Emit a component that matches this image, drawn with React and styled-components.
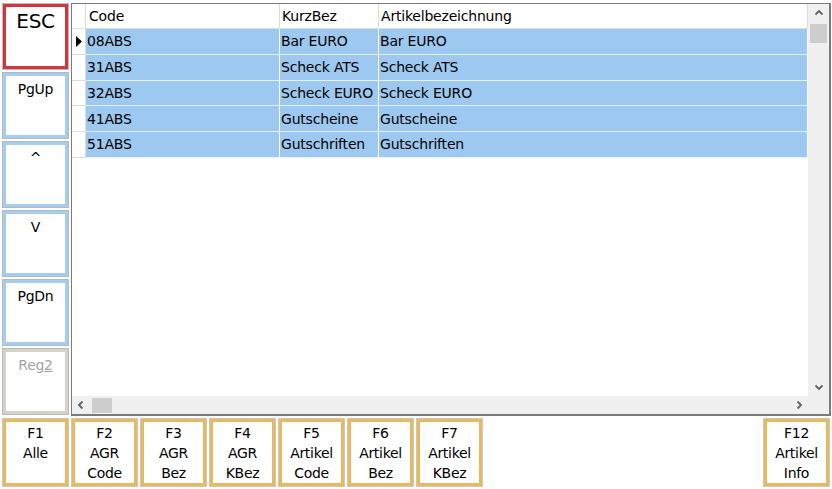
import React from "react";
import styled, { createGlobalStyle } from "styled-components";

const Global = createGlobalStyle`
  html, body { margin: 0; padding: 0; background: #ffffff; }
  body { font-family: "DejaVu Sans", "Liberation Sans", sans-serif; }
  * { box-sizing: border-box; }
`;

const Page = styled.div`
  width: 832px;
  height: 489px;
  display: flex;
  flex-direction: column;
  background: #ffffff;
  overflow: hidden;
`;

const Top = styled.div`
  display: flex;
  height: 416px;
  padding-top: 3px;
  gap: 1px;
`;

const SideCol = styled.div`
  width: 70px;
  padding-left: 2px;
  display: flex;
  flex-direction: column;
  gap: 2px;
`;

const KeyButton = styled.div`
  width: 67px;
  height: 67px;
  border: 1px solid #b9b9b9;
  background: #ffffff;
  display: flex;
  flex-direction: column;
  align-items: center;
  box-shadow: inset 0 0 0 3px ${(p) => p.$color};
  padding-top: ${(p) => p.$pad || 6}px;
  font-size: ${(p) => p.$size || 14}px;
  line-height: 20px;
  color: ${(p) => (p.$disabled ? "#a3a3a3" : "#000000")};
  font-family: "DejaVu Sans", "Liberation Sans", sans-serif;
  letter-spacing: -0.3px;
`;

const Underline = styled.span`
  text-decoration: underline;
`;

const GridBox = styled.div`
  width: 760px;
  height: 413px;
  border: 1px solid #7a7a7a;
  border-right-width: 2px;
  border-bottom-width: 2px;
  display: grid;
  grid-template-columns: 1fr 21px;
  grid-template-rows: 1fr 18px;
  background: #ffffff;
`;

const Table = styled.div`
  display: flex;
  flex-direction: column;
  overflow: hidden;
  font-size: 14px;
  letter-spacing: -0.2px;
  color: #000;
`;

const Row = styled.div`
  display: grid;
  grid-template-columns: 14px 194px 99px 1fr;
  height: ${(p) => (p.$header ? 25 : 25.75)}px;
  flex-shrink: 0;
`;

const Cell = styled.div`
  display: flex;
  align-items: center;
  padding-left: ${(p) => (p.$pad ?? 1)}px;
  white-space: nowrap;
  overflow: hidden;
  background: ${(p) => (p.$sel ? "#9dc8ef" : "#ffffff")};
  border-right: 1px solid ${(p) => (p.$sel ? "#ffffff" : "#dcdcdc")};
  border-bottom: 1px solid ${(p) => (p.$sel ? "#e6f1fb" : "#dcdcdc")};
`;

const RowHead = styled.div`
  display: flex;
  align-items: center;
  justify-content: center;
  background: #ffffff;
  border-right: 1px solid #dcdcdc;
  border-bottom: 1px solid #dcdcdc;
`;

const VScroll = styled.div`
  background: #f0f0f0;
  display: flex;
  flex-direction: column;
  align-items: center;
  padding: 0 1px;
`;

const HScroll = styled.div`
  background: #f0f0f0;
  display: flex;
  align-items: center;
`;

const Corner = styled.div`
  background: #f0f0f0;
`;

const ArrowBox = styled.div`
  width: ${(p) => (p.$h ? 18 : 19)}px;
  height: ${(p) => (p.$h ? 17 : 18)}px;
  display: flex;
  align-items: center;
  justify-content: center;
  flex-shrink: 0;
`;

const VThumb = styled.div`
  width: 17px;
  height: 19px;
  margin-top: 2px;
  background: #cdcdcd;
`;

const HThumb = styled.div`
  width: 20px;
  height: 15px;
  margin-left: 2px;
  background: #cdcdcd;
`;

const Spacer = styled.div`
  flex: 1;
`;

const Bottom = styled.div`
  display: flex;
  padding: 2px 2px 0 2px;
  gap: 2px;
`;

const FButton = styled.div`
  width: 67px;
  height: 69px;
  border: 1px solid #c9c9c9;
  box-shadow: inset 0 0 0 3px #e9b95d;
  background: #fff;
  display: flex;
  flex-direction: column;
  align-items: center;
  padding-top: 4px;
  font-size: 14px;
  line-height: 20px;
  letter-spacing: -0.3px;
  color: #000;
  margin-left: ${(p) => (p.$push ? "auto" : "0")};
`;

const Chev = ({ dir }) => {
  const paths = {
    up: "M1.5 6.5 L5 3 L8.5 6.5",
    down: "M1.5 3.5 L5 7 L8.5 3.5",
    left: "M6.5 1.5 L3 5 L6.5 8.5",
    right: "M3.5 1.5 L7 5 L3.5 8.5",
  };
  return (
    <svg width="10" height="10" viewBox="0 0 10 10">
      <path d={paths[dir]} fill="none" stroke="#606060" strokeWidth="1.8" />
    </svg>
  );
};

const RowMark = () => (
  <svg width="6" height="11" viewBox="0 0 6 11">
    <path d="M0 0 L6 5.5 L0 11 Z" fill="#000" />
  </svg>
);

const rows = [
  ["08ABS", "Bar EURO", "Bar EURO"],
  ["31ABS", "Scheck ATS", "Scheck ATS"],
  ["32ABS", "Scheck EURO", "Scheck EURO"],
  ["41ABS", "Gutscheine", "Gutscheine"],
  ["51ABS", "Gutschriften", "Gutschriften"],
];

const fkeys = [
  ["F1", "Alle"],
  ["F2", "AGR", "Code"],
  ["F3", "AGR", "Bez"],
  ["F4", "AGR", "KBez"],
  ["F5", "Artikel", "Code"],
  ["F6", "Artikel", "Bez"],
  ["F7", "Artikel", "KBez"],
];

export default function App() {
  return (
    <Page>
      <Global />
      <Top>
        <SideCol>
          <KeyButton $color="#d2353b" $size={20} $pad={7}>ESC</KeyButton>
          <KeyButton $color="#a5cdf0">PgUp</KeyButton>
          <KeyButton $color="#a5cdf0">^</KeyButton>
          <KeyButton $color="#a5cdf0">V</KeyButton>
          <KeyButton $color="#a5cdf0">PgDn</KeyButton>
          <KeyButton $color="#d6d2cb" $disabled>
            <span>
              Reg<Underline>2</Underline>
            </span>
          </KeyButton>
        </SideCol>
        <GridBox>
          <Table>
            <Row $header>
              <RowHead />
              <Cell $pad={3}>Code</Cell>
              <Cell $pad={2}>KurzBez</Cell>
              <Cell $pad={2}>Artikelbezeichnung</Cell>
            </Row>
            {rows.map((r, i) => (
              <Row key={r[0]}>
                <RowHead>{i === 0 ? <RowMark /> : null}</RowHead>
                <Cell $sel>{r[0]}</Cell>
                <Cell $sel>{r[1]}</Cell>
                <Cell $sel>{r[2]}</Cell>
              </Row>
            ))}
          </Table>
          <VScroll>
            <ArrowBox>
              <Chev dir="up" />
            </ArrowBox>
            <VThumb />
            <Spacer />
            <ArrowBox>
              <Chev dir="down" />
            </ArrowBox>
          </VScroll>
          <HScroll>
            <ArrowBox $h>
              <Chev dir="left" />
            </ArrowBox>
            <HThumb />
            <Spacer />
            <ArrowBox $h>
              <Chev dir="right" />
            </ArrowBox>
          </HScroll>
          <Corner />
        </GridBox>
      </Top>
      <Bottom>
        {fkeys.map((k) => (
          <FButton key={k[0]}>
            {k.map((t) => (
              <span key={t}>{t}</span>
            ))}
          </FButton>
        ))}
        <FButton $push>
          <span>F12</span>
          <span>Artikel</span>
          <span>Info</span>
        </FButton>
      </Bottom>
    </Page>
  );
}
